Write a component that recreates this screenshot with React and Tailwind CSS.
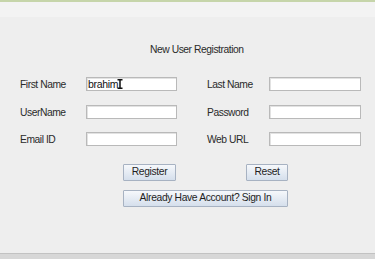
import React from 'react';

const font = { fontFamily: '"Liberation Sans", Arial, sans-serif' };

const Field = ({ value, cursor }) => (
  <div className="h-[14px] bg-white border border-[#b9b9b9] shadow-[inset_1px_1px_0_#e2e2e2] flex items-center pl-[1px] relative">
    {value && <span className="text-[10.5px] leading-none text-[#111] tracking-[-0.3px]">{value}</span>}
    {cursor && (
      <svg width="6" height="10" viewBox="0 0 6 10" className="-ml-[1px]">
        <path d="M0.5 0.75h5M0.5 9.25h5M3 0.75v8.5" stroke="#111" strokeWidth="1.5" fill="none" />
      </svg>
    )}
  </div>
);

const Label = ({ children }) => (
  <div className="text-[10.3px] leading-none text-[#2a2a2a] tracking-[-0.45px] pt-[3px]">{children}</div>
);

const Btn = ({ children, className }) => (
  <button className={`h-[17px] border border-[#a7b2c2] rounded-[1px] bg-gradient-to-b from-[#f6f8fb] to-[#d5dfec] text-[10.3px] leading-none text-[#1e1e1e] tracking-[-0.35px] ${className}`}>
    {children}
  </button>
);

export default function App() {
  return (
    <div className="w-[375px] h-[259px] flex flex-col bg-[#eeeeee] overflow-hidden" style={font}>
      <div className="h-[2px] bg-[#c6d5aa]" />
      <div className="h-[15px] bg-[#f3f3f3]" />
      <div className="h-[236px] flex flex-col">
        <div className="mt-[27px] ml-[150px] text-[10.3px] leading-[12px] text-[#2a2a2a] tracking-[-0.45px]">New User Registration</div>
        <div className="mt-[21px] ml-[20px] grid grid-cols-[66px_91px_30px_62px_92px] gap-y-[13.5px] items-center">
          <Label>First Name</Label>
          <Field value="brahim" cursor />
          <div />
          <Label>Last Name</Label>
          <Field />
          <Label>UserName</Label>
          <Field />
          <div />
          <Label>Password</Label>
          <Field />
          <Label>Email ID</Label>
          <Field />
          <div />
          <Label>Web URL</Label>
          <Field />
        </div>
        <div className="mt-[18px] ml-[123px] w-[165px] flex flex-col gap-[9px]">
          <div className="flex justify-between">
            <Btn className="w-[53px]">Register</Btn>
            <Btn className="w-[42px]">Reset</Btn>
          </div>
          <Btn className="w-[165px]">Already Have Account? Sign In</Btn>
        </div>
      </div>
      <div className="flex-1 border-t border-[#c2c2c2] bg-[#d7d7d7]" />
    </div>
  );
}
